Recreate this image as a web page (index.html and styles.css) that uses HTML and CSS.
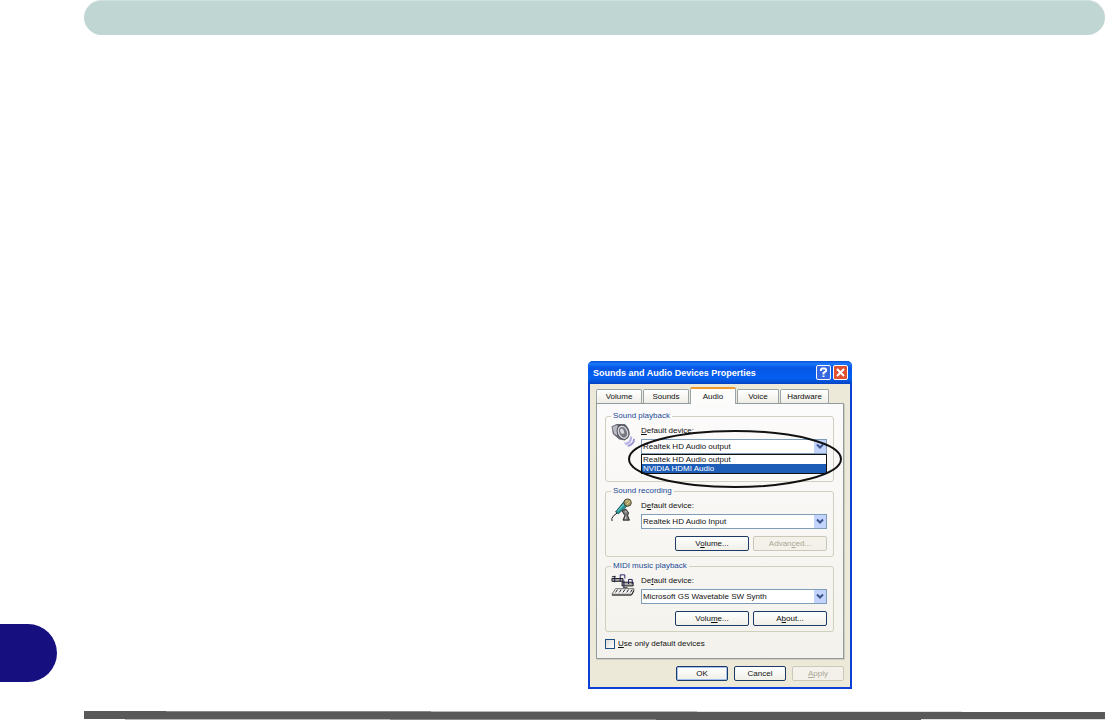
FILE: index.html
```html
<!DOCTYPE html>
<html lang="en">
<head>
    <meta charset="UTF-8">
    <meta name="viewport" content="width=device-width, initial-scale=1.0">
    <title>Sounds and Audio Devices Properties</title>
    <link rel="stylesheet" href="styles.css">
</head>
<body>
    <header class="page-header"></header>
    <aside class="margin">
        <div class="thumb-tab"></div>
    </aside>
    <main class="content">
        <section class="window" aria-labelledby="title">
            <div class="title-bar">
                <h1 id="title">Sounds and Audio Devices Properties</h1>
                <button class="caption-btn help" aria-label="Help">
                    <svg viewBox="0 0 13 13"><path d="M4 5V3.5L5 2.5H8L9 3.5V5L6.5 7V8.5M6.5 9.5V11"/></svg>
                </button>
                <button class="caption-btn close" aria-label="Close">
                    <svg viewBox="0 0 13 13"><path d="M3 3L10 10M10 3L3 10"/></svg>
                </button>
            </div>
            <form class="window-body">
                <div class="tabs" role="tablist">
                    <button type="button" class="tab" role="tab">Volume</button>
                    <button type="button" class="tab" role="tab">Sounds</button>
                    <button type="button" class="tab active" role="tab" aria-selected="true">Audio</button>
                    <button type="button" class="tab narrow" role="tab">Voice</button>
                    <button type="button" class="tab wide" role="tab">Hardware</button>
                </div>
                <div class="panel" role="tabpanel">
                    <fieldset class="group">
                        <legend>Sound playback</legend>
                        <svg class="icon" viewBox="0 0 26 26">
                            <path d="M14 21Q20 22 21 14L23 15Q23 23 16 24Z" fill="#b9b5e6"/>
                            <path d="M18 25Q25 23 25 17" fill="none" stroke="#9a96d0" stroke-width="2"/>
                            <path d="M1 4L6 1L15 1Q21 6 20 13L15 19L9 18L2 12Z" fill="#666872"/>
                            <path d="M1 4L6 2L10 5L7 14L3 12Z" fill="#b9bac5" stroke="#6d6f7b"/>
                            <ellipse cx="13" cy="10" rx="6" ry="8" transform="rotate(-25 13 10)" fill="#d5d5da" stroke="#484a52"/>
                            <ellipse cx="13" cy="10" rx="4" ry="6" transform="rotate(-25 13 10)" fill="#777982"/>
                            <ellipse cx="12" cy="9" rx="2" ry="3" transform="rotate(-25 12 9)" fill="#d8d8df"/>
                        </svg>
                        <div class="fields">
                            <label for="playback"><u>D</u>efault device:</label>
                            <div class="combo">
                                <select id="playback">
                                    <option>Realtek HD Audio output</option>
                                    <option>NVIDIA HDMI Audio</option>
                                </select>
                                <svg class="arrow" viewBox="0 0 12 12"><path d="M3 4L6 7L9 4"/></svg>
                                <ul class="menu">
                                    <li>Realtek HD Audio output</li>
                                    <li class="selected">NVIDIA HDMI Audio</li>
                                </ul>
                                <svg class="callout" viewBox="0 0 216 60"><ellipse cx="108" cy="30" rx="106" ry="28"/></svg>
                            </div>
                        </div>
                    </fieldset>
                    <fieldset class="group">
                        <legend>Sound recording</legend>
                        <svg class="icon" viewBox="0 0 26 26">
                            <path d="M1 25V22L3 19L7 16" fill="none" stroke="#111"/>
                            <path d="M5 15L14 4L18 8L8 17Z" fill="#2b9c9e" stroke="#124548"/>
                            <path d="M7 14L15 6" stroke="#8edde0"/>
                            <circle cx="18" cy="5" r="4" fill="#a59b62" stroke="#3e3c2c"/>
                            <path d="M16 4L18 2M17 7L21 3" stroke="#e8dfaa"/>
                            <path d="M12 14L16 12L19 16L18 19L20 24H13L15 19Z" fill="#777" stroke="#222"/>
                            <path d="M15 15H17M16 20V23" stroke="#eee"/>
                        </svg>
                        <div class="fields">
                            <label for="recording">D<u>e</u>fault device:</label>
                            <div class="combo">
                                <select id="recording">
                                    <option>Realtek HD Audio Input</option>
                                </select>
                                <svg class="arrow" viewBox="0 0 12 12"><path d="M3 4L6 7L9 4"/></svg>
                            </div>
                            <div class="actions">
                                <button type="button" class="btn">V<u>o</u>lume...</button>
                                <button type="button" class="btn" disabled>Advan<u>c</u>ed...</button>
                            </div>
                        </div>
                    </fieldset>
                    <fieldset class="group">
                        <legend>MIDI music playback</legend>
                        <svg class="icon" viewBox="0 0 26 26">
                            <path d="M1 6H13V9H1ZM12 10H24V14H12Z" fill="#aaa" stroke="#111"/>
                            <path d="M4 3V10M10 9V2H15V6M14 8V15M19 12V7H23V12" fill="none" stroke="#15155c"/>
                            <path d="M1 4H5M13 16H18" stroke="#111"/>
                            <path d="M1 23L5 17H25L23 23Z" fill="#f4f4f4" stroke="#666"/>
                            <path d="M1 24H22L25 19" fill="none" stroke="#111"/>
                            <path d="M5 21L7 18M9 21L11 18M13 21L15 18M17 21L19 18M21 21L23 18" stroke="#111"/>
                        </svg>
                        <div class="fields">
                            <label for="midi">De<u>f</u>ault device:</label>
                            <div class="combo">
                                <select id="midi">
                                    <option>Microsoft GS Wavetable SW Synth</option>
                                </select>
                                <svg class="arrow" viewBox="0 0 12 12"><path d="M3 4L6 7L9 4"/></svg>
                            </div>
                            <div class="actions">
                                <button type="button" class="btn">Volu<u>m</u>e...</button>
                                <button type="button" class="btn">A<u>b</u>out...</button>
                            </div>
                        </div>
                    </fieldset>
                    <label class="check"><input type="checkbox"><span><u>U</u>se only default devices</span></label>
                </div>
                <div class="dialog-actions">
                    <button type="button" class="btn default">OK</button>
                    <button type="button" class="btn">Cancel</button>
                    <button type="button" class="btn" disabled><u>A</u>pply</button>
                </div>
            </form>
        </section>
    </main>
    <footer class="page-footer"></footer>
</body>
</html>
```

FILE: styles.css
```css
* {
    box-sizing: border-box;
}
body {
    margin: 0;
    min-height: 100vh;
    display: grid;
    grid-template-columns: 84px 1fr;
    grid-template-rows: 35px 1fr 10px;
    padding-right: 1px;
    background: white;
    font-family: "Liberation Sans", Arial, sans-serif;
    font-size: 8px;
    line-height: 10px;
    color: #111;
}
button, select {
    font: inherit;
    color: inherit;
    margin: 0;
    padding: 0;
}
.page-header {
    grid-column: 2;
    background: #c0d6d3;
    border-top: 1px solid #d0e1df;
    border-radius: 18px;
}
.page-footer {
    grid-column: 2;
    height: 9px;
    background:
        linear-gradient(90deg, #595959 8%, #888 8% 34%, #b8b8b8 34% 60%, #e0e0e0 60% 86%, white 86%) top / 100% 1px no-repeat,
        linear-gradient(90deg, white 4%, #bbb 4% 30%, #888 30% 56%, #595959 56% 82%, #ddd 82%) bottom / 100% 1px no-repeat,
        #595959;
}
.margin {
    grid-row: 2;
    display: flex;
    align-items: flex-end;
    padding-bottom: 29px;
}
.thumb-tab {
    width: 57px;
    height: 58px;
    background: #150f80;
    border-radius: 0 29px 29px 0;
}
.content {
    display: grid;
    grid-template-columns: 504px 1fr;
    align-items: end;
    padding-bottom: 22px;
}

/* dialog window */
.window {
    grid-column: 2;
    width: 264px;
    background: #ece9d8;
    border: 2px solid #0b3fd8;
    border-top: 0;
    border-radius: 5px 5px 0 0;
}
.title-bar {
    display: flex;
    align-items: center;
    gap: 2px;
    height: 23px;
    margin: 0 -2px;
    padding: 0 4px 0 5px;
    background: linear-gradient(#0a52d8, #1c78f8 12%, #0556e4 30%, #0560f0 75%, #0444c4);
    border-radius: 5px 5px 0 0;
}
.title-bar h1 {
    flex: 1;
    margin: 0;
    font-size: 9px;
    line-height: 12px;
    color: white;
    white-space: nowrap;
}
.caption-btn {
    width: 15px;
    height: 15px;
    border: 1px solid white;
    border-radius: 2px;
}
.caption-btn svg {
    display: block;
    width: 13px;
    height: 13px;
    fill: none;
    stroke: white;
    stroke-width: 2;
}
.help {
    background: #3768e0;
}
.close {
    background: #df5130;
}
.window-body {
    padding: 2px 6px 6px;
}
.tabs {
    display: flex;
    align-items: flex-end;
    gap: 1px;
    height: 17px;
}
.tab {
    width: 46px;
    height: 14px;
    background: linear-gradient(white, #efeee7);
    border: 1px solid #9aa5aa;
    border-bottom: 0;
    border-radius: 2px 2px 0 0;
}
.tab.narrow {
    width: 42px;
}
.tab.wide {
    width: 49px;
}
.tab.active {
    position: relative;
    height: 17px;
    margin-bottom: -1px;
    background: #fcfcfa;
    border-top: 2px solid #ef9a2e;
}
.panel {
    padding: 7px 9px 9px 8px;
    background: linear-gradient(#fcfbfb, #f4f2ec);
    border: 1px solid #919b9c;
    box-shadow: 1px 1px #cfccbd;
}
.group {
    display: flex;
    gap: 6px;
    height: 71px;
    min-width: 0;
    margin: 0 0 4px;
    padding: 0 6px 0 5px;
    border: 1px solid #d0d0bf;
    border-radius: 3px;
}
.group legend {
    padding: 0 2px;
    color: #1a4a96;
}
.icon {
    width: 24px;
    height: 24px;
    margin-top: 2px;
}
.fields {
    flex: 1;
    min-width: 0;
    padding-top: 5px;
}
.fields label {
    display: block;
    margin-bottom: 3px;
}
.combo {
    position: relative;
    display: grid;
    height: 15px;
}
.combo select {
    grid-area: 1 / 1;
    width: 100%;
    height: 15px;
    padding-left: 1px;
    appearance: none;
    background: white;
    border: 1px solid #7f9db9;
    border-radius: 0;
}
.arrow {
    grid-area: 1 / 1;
    justify-self: end;
    align-self: center;
    width: 12px;
    height: 13px;
    margin-right: 1px;
    background: #c2d3fc;
    fill: none;
    stroke: #3c5488;
    stroke-width: 2;
    pointer-events: none;
}
.menu {
    position: absolute;
    top: 15px;
    left: 0;
    right: 0;
    margin: 0;
    padding: 0;
    list-style: none;
    background: white;
    border: 1px solid #111;
}
.menu li {
    padding-left: 1px;
    line-height: 9px;
}
.menu .selected {
    background: #1d5db8;
    color: white;
}
.callout {
    position: absolute;
    top: -10px;
    left: -14px;
    width: 216px;
    height: 60px;
    fill: none;
    stroke: #111;
    stroke-width: 2;
    pointer-events: none;
}
.actions {
    display: flex;
    justify-content: flex-end;
    gap: 4px;
    margin-top: 7px;
}
.btn {
    width: 74px;
    height: 15px;
    background: linear-gradient(white, #f0efe8);
    border: 1px solid #1c3a66;
    border-radius: 2px;
}
.btn.default {
    box-shadow: inset 0 0 0 1px #a5bff0;
}
.btn:disabled {
    background: #f3f1e9;
    border-color: #cbc8ba;
    color: #a9a797;
}
.check {
    display: flex;
    align-items: center;
    gap: 3px;
    margin-top: 7px;
}
.check input {
    width: 10px;
    height: 10px;
    margin: 0;
    appearance: none;
    background: linear-gradient(135deg, #dcdcd7, white);
    border: 1px solid #1c5180;
}
.dialog-actions {
    display: flex;
    justify-content: flex-end;
    gap: 6px;
    margin-top: 7px;
}
.dialog-actions .btn {
    width: 52px;
}
```
